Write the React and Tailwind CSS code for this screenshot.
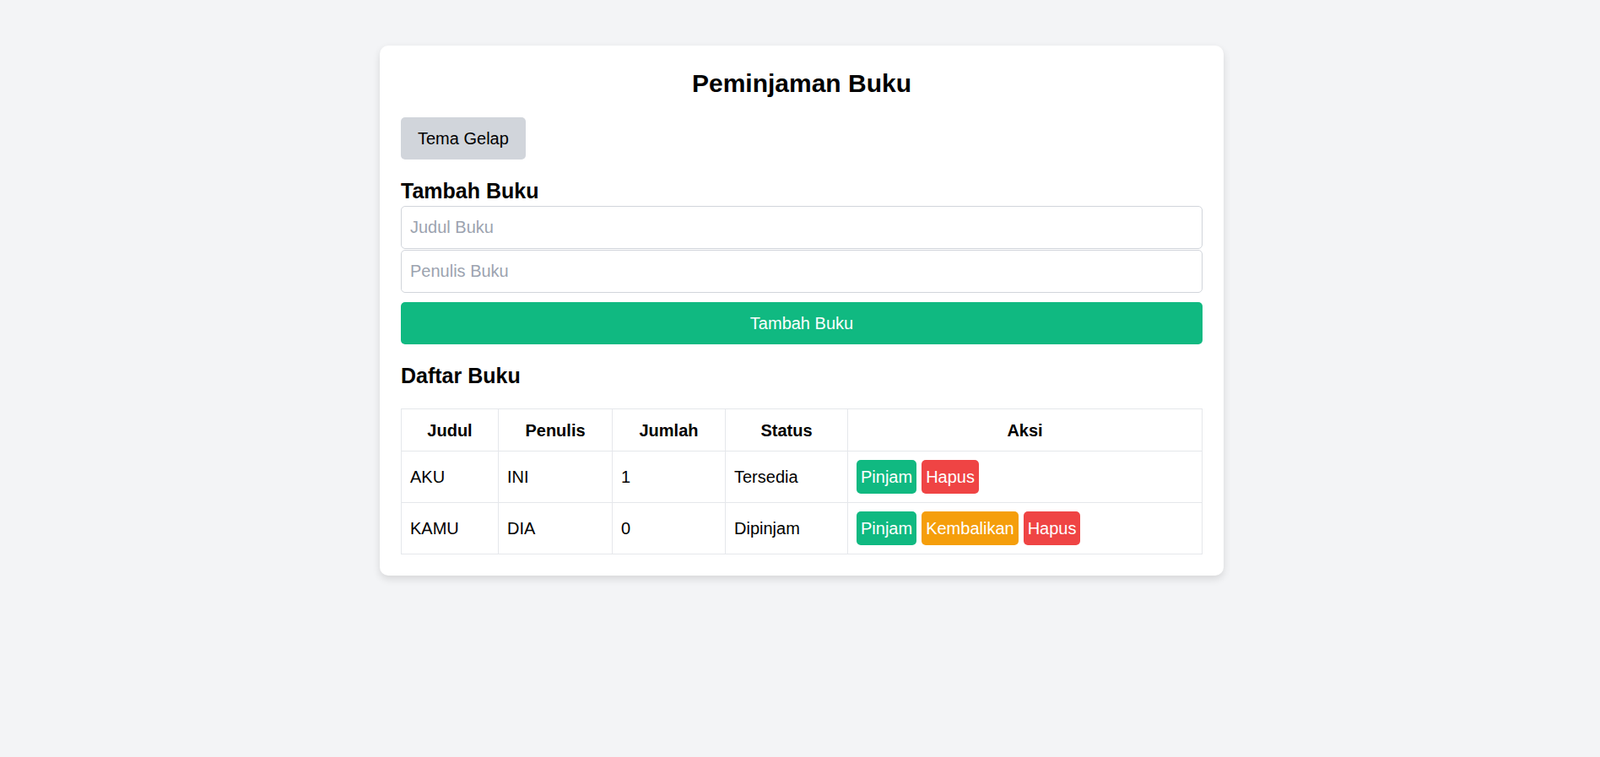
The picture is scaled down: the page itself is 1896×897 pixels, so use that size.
import { useState } from "react";

const books = [
  { judul: "AKU", penulis: "INI", jumlah: 1, status: "Tersedia", dipinjam: false },
  { judul: "KAMU", penulis: "DIA", jumlah: 0, status: "Dipinjam", dipinjam: true },
];

function ActionButton({ color, children }) {
  return (
    <button className={`h-[40px] rounded-[5px] px-[5px] text-[20px] leading-[30px] text-white ${color}`}>
      {children}
    </button>
  );
}

export default function App() {
  const [judul, setJudul] = useState("");
  const [penulis, setPenulis] = useState("");

  return (
    <div className="min-h-screen bg-[#f3f4f6] pl-[4px] pt-[54px] font-['Liberation_Sans',Arial,sans-serif] text-black">
      <div className="mx-auto w-[1000px] rounded-[10px] bg-white p-[25px] shadow-[0_4px_10px_rgba(0,0,0,0.12)]">

        {/* Judul */}

        <h1 className="mb-[20px] text-center text-[30px] font-bold leading-[40px]">
          Peminjaman Buku
        </h1>

        <button className="h-[50px] rounded-[5px] bg-[#d1d5db] px-[20px] text-[20px] leading-[30px]">
          Tema Gelap
        </button>

        {/* Form tambah */}

        <h2 className="mt-[20px] text-[25px] font-bold leading-[35px]">Tambah Buku</h2>

        <input
          value={judul}
          onChange={(e) => setJudul(e.target.value)}
          placeholder="Judul Buku"
          className="block h-[51px] w-full rounded-[5px] border border-[#d1d5db] px-[10px] text-[20px] outline-none placeholder:text-[#9ca3af]"
        />
        <input
          value={penulis}
          onChange={(e) => setPenulis(e.target.value)}
          placeholder="Penulis Buku"
          className="mt-[1px] block h-[51px] w-full rounded-[5px] border border-[#d1d5db] px-[10px] text-[20px] outline-none placeholder:text-[#9ca3af]"
        />

        <button className="mt-[11px] block h-[50px] w-full rounded-[5px] bg-[#10b981] text-[20px] leading-[30px] text-white">
          Tambah Buku
        </button>

        {/* Daftar */}

        <h2 className="mt-[20px] text-[25px] font-bold leading-[35px]">Daftar Buku</h2>

        <table className="mt-[21px] w-full border-collapse border border-[#e5e7eb] text-[20px] leading-[30px]">
          <thead>
            <tr className="h-[50px]">
              <th className="w-[115px] border border-[#e5e7eb] px-[10px]">Judul</th>
              <th className="w-[135px] border border-[#e5e7eb] px-[10px]">Penulis</th>
              <th className="w-[134px] border border-[#e5e7eb] px-[10px]">Jumlah</th>
              <th className="w-[145px] border border-[#e5e7eb] px-[10px]">Status</th>
              <th className="border border-[#e5e7eb] px-[10px]">Aksi</th>
            </tr>
          </thead>
          <tbody>
            {books.map((b) => (
              <tr key={b.judul} className="h-[61px]">
                <td className="border border-[#e5e7eb] px-[10px]">{b.judul}</td>
                <td className="border border-[#e5e7eb] px-[10px]">{b.penulis}</td>
                <td className="border border-[#e5e7eb] px-[10px]">{b.jumlah}</td>
                <td className="border border-[#e5e7eb] px-[10px]">{b.status}</td>
                <td className="border border-[#e5e7eb] px-[10px]">
                  <div className="flex gap-[6px]">
                    <ActionButton color="bg-[#10b981]">Pinjam</ActionButton>
                    {b.dipinjam && <ActionButton color="bg-[#f59e0b]">Kembalikan</ActionButton>}
                    <ActionButton color="bg-[#ef4444]">Hapus</ActionButton>
                  </div>
                </td>
              </tr>
            ))}
          </tbody>
        </table>

      </div>
    </div>
  );
}
